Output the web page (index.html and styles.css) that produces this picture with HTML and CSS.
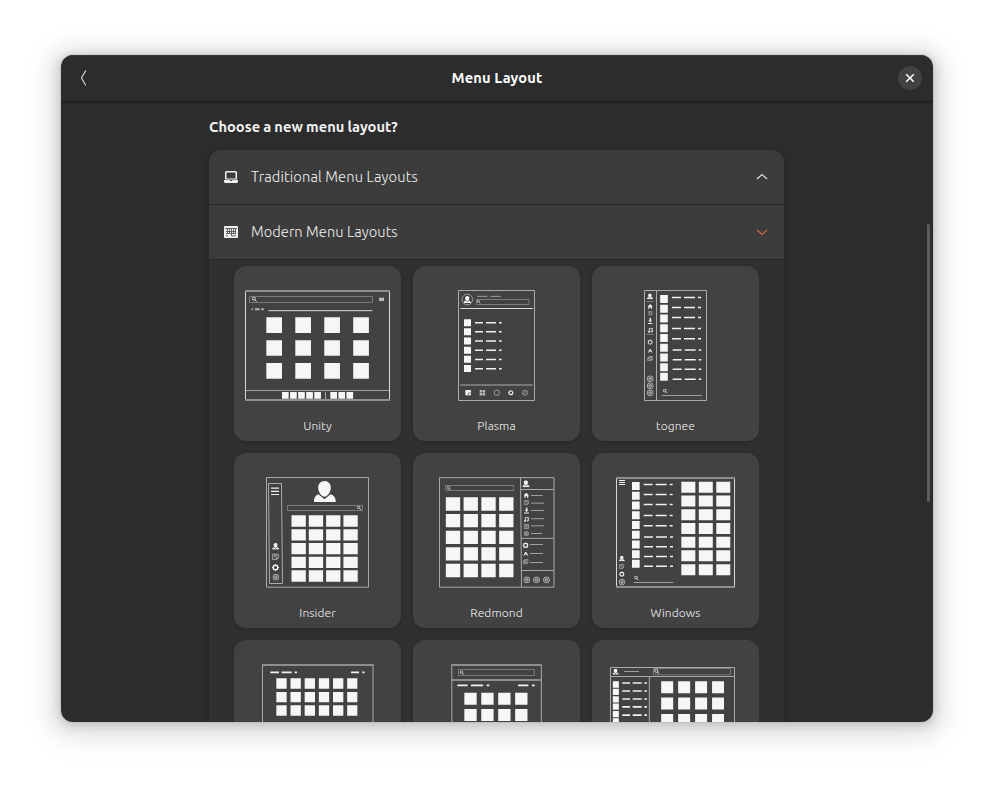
FILE: index.html
```html
<!DOCTYPE html>
<html lang="en">
<head>
<meta charset="utf-8">
<title>Menu Layout</title>
<link rel="stylesheet" href="styles.css">
</head>
<body>
<svg class="sprite" aria-hidden="true">
  <symbol id="user" viewBox="0 0 66 64"><path fill="#f6f6f6" d="M32 0C44 0 51 9 51 20C51 33 40 47 32 47C24 47 13 33 13 20C13 9 20 0 32 0ZM14 40L32 55L50 40Q66 45 66 63H0Q0 45 14 40Z"/></symbol>
  <symbol id="search" viewBox="0 0 16 16"><circle cx="6.5" cy="6" r="4.5"/><path d="M10 9.5L15 15"/></symbol>
  <symbol id="home" viewBox="0 0 16 16"><path fill="#eee" stroke="none" d="M8 0L16 8H14V15H10V10H6V15H2V8H0Z"/></symbol>
  <symbol id="note" viewBox="0 0 20 20"><path d="M2 2H18V13L13 18H2ZM13 18V13H18M6 6H14M6 10H12"/></symbol>
  <symbol id="download" viewBox="0 0 16 20"><path fill="#eee" stroke="none" d="M6 0H11V8H14L8 14L2 8H6ZM0 16H16V19H0Z"/></symbol>
  <symbol id="music" viewBox="0 0 16 16"><path d="M5 13V2H14V11"/><circle cx="3.5" cy="13" r="2"/><circle cx="12" cy="11.5" r="2"/></symbol>
  <symbol id="gear" viewBox="0 0 20 20"><circle cx="10" cy="10" r="6.5" stroke-width="4"/><path stroke-width="3" d="M10 0V3M10 17V20M0 10H3M17 10H20M3 3L5 5M15 15L17 17M3 17L5 15M15 5L17 3"/></symbol>
  <symbol id="tools" viewBox="0 0 16 16"><path stroke-width="3" d="M2 14L8 3L14 14M4 9H12"/></symbol>
  <symbol id="stack" viewBox="0 0 20 18"><path d="M6 2H18V11H6ZM6 6H2V16H14V11M9 5H15"/></symbol>
  <symbol id="round" viewBox="0 0 20 20"><circle cx="10" cy="10" r="8.5" stroke-width="2.4"/><circle cx="10" cy="10" r="4"/><path d="M7 10H13"/></symbol>
  <symbol id="box" viewBox="0 0 16 16"><path d="M1 2H15V14H1ZM4 5L12 11M12 5L4 11"/></symbol>
</svg>

<main class="window">
  <header class="titlebar">
    <svg class="back" viewBox="0 0 16 16"><path d="M9.800 .5L5.500 8L9.800 15.500"/></svg>
    <h1>Menu Layout</h1>
    <button class="close" aria-label="Close"><svg viewBox="0 0 24 24"><path d="M8.2 8.2L15.8 15.8M15.8 8.2L8.2 15.8"/></svg></button>
  </header>

  <div class="body">
    <section class="content">
      <h2>Choose a new menu layout?</h2>
      <div class="list">
        <div class="row">
          <svg class="row-icon" viewBox="0 0 16 16"><path fill="#f0f0f0" fill-rule="evenodd" d="M3.500 2H12.500Q14 2 14 3.500V10.500H2V3.500Q2 2 3.500 2ZM3.500 3.500V9.500H12.500V3.500ZM1 11H6.500L7.500 12H8.500L9.500 11H15V12.500Q15 14 13.500 14H2.500Q1 14 1 12.500Z"/></svg>
          <span class="row-title">Traditional Menu Layouts</span>
          <svg class="arrow" viewBox="0 0 16 16"><path d="M3 10L8 5.500L13 10"/></svg>
        </div>
        <div class="row">
          <svg class="row-icon" viewBox="0 0 16 16"><path fill="#f0f0f0" d="M2 2H14Q15 2 15 3V13Q15 14 14 14H2Q1 14 1 13V3Q1 2 2 2Z"/><path fill="none" stroke="#555" stroke-width=".9" d="M2 4.500H14M3 7.500H13M3 9.500H13M4.500 5V9.500M6.500 5V9.500M8.500 5V12M10.500 5V9.500M12.500 5V9.500M3 11.800H5M8 11.800H13"/></svg>
          <span class="row-title modern">Modern Menu Layouts</span>
          <svg class="arrow open" viewBox="0 0 16 16"><path d="M3 6L8 10.500L13 6"/></svg>
        </div>

        <div class="grid">
          <figure class="card">
            <svg class="thumb" viewBox="12 18 501 420">
              <path class="line bright" d="M46.500 90V423M478.500 90V423"/>
              <path class="line thick" d="M45 93H480M45 420H480"/>
              <path class="line" d="M48 391.500H477M286.500 396V417"/>
              <path class="line dim" d="M58.500 109.500H427.500V127.500H58.500Z"/>
              <use class="glyph strong" href="#search" x="65" y="110" width="16" height="16"/>
              <path class="dash dim" stroke-width="10" d="M447 118H462"/>
              <path class="dash dim" stroke-width="6" stroke-dasharray="4 6 14 5 7 99" d="M65 147.500H102"/>
              <path class="line bright" stroke-width="4" d="M115 152H427"/>
              <path class="tile" stroke-width="47" stroke-dasharray="47 39.900" d="M109 195.500H417M109 264H417M109 332.500H417"/>
              <path class="tile" stroke-width="20" stroke-dasharray="20 4.200" d="M156 406H273M301 406H370"/>
            </svg>
            <figcaption>Unity</figcaption>
          </figure>

          <figure class="card">
            <svg class="thumb" viewBox="9 18 501 420">
              <path class="line frame" d="M145.500 91.500H373.500V421.500H145.500Z"/>
              <circle class="line" cx="172" cy="118.500" r="16"/>
              <use href="#user" x="161" y="108" width="22" height="21"/>
              <path class="line" d="M201 109H232M241 109H272"/>
              <path class="line dim" d="M199.500 118.500H357V133.500H199.500Z"/>
              <use class="glyph strong" href="#search" x="200" y="119" width="12" height="13"/>
              <path class="line bright" d="M151 145.500H369"/>
              <path class="line thick dimmer" d="M151 375H368"/>
              <path class="tile" stroke-width="21" stroke-dasharray="21 6.500" d="M172.500 177.500V337"/>
              <path class="dash" stroke-width="4.500" stroke-dasharray="24 9 30 9 8 99" d="M195 188H276M195 215.500H276M195 243H276M195 270.500H276M195 298.500H276M195 326H276"/>
              <path class="dash" stroke-width="16" d="M166 398H183"/><path class="line dimmer" d="M175 407V399H183"/>
              <path class="dash dim" stroke-width="7.500" stroke-dasharray="7.500 1.500" d="M209 393.500H226M209 402.500H226"/>
              <rect class="line" x="253" y="391" width="15" height="14" rx="4"/>
              <use class="glyph strong" href="#gear" x="294" y="390" width="17" height="17"/>
              <circle class="line" cx="345" cy="398" r="7.500"/><path class="line" d="M341 400L349 394"/>
            </svg>
            <figcaption>Plasma</figcaption>
          </figure>

          <figure class="card">
            <svg class="thumb" viewBox="12 18 501 420">
              <path class="line frame" d="M169.500 91.500H355.500V421.500H169.500Z"/>
              <path class="line frame" d="M205.500 91V421"/>
              <use href="#user" x="177" y="100" width="18" height="18"/>
              <path class="line dim" d="M175 124.500H197M175 223.500H197"/>
              <use class="glyph" href="#home" x="179" y="132" width="15" height="15"/>
              <use class="glyph" href="#note" x="179" y="152" width="15" height="15"/>
              <use class="glyph" href="#download" x="179" y="174" width="15" height="19"/>
              <use class="glyph strong" href="#music" x="179" y="203" width="16" height="16"/>
              <use class="glyph" href="#gear" x="178" y="238" width="17" height="17"/>
              <use class="glyph strong" href="#tools" x="179" y="264" width="15" height="16"/>
              <use class="glyph" href="#stack" x="177" y="288" width="19" height="16"/>
              <use class="glyph" href="#round" x="176" y="346" width="21" height="21"/>
              <use class="glyph" href="#round" x="176" y="367" width="21" height="21"/>
              <use class="glyph" href="#round" x="176" y="388" width="21" height="21"/>
              <path class="tile" stroke-width="23" stroke-dasharray="24 5.200" d="M228 105V363"/>
              <path class="dash" stroke-width="4.500" stroke-dasharray="27 9 33 9 9 99" d="M252 112.500H339M252 142.500H339M252 172.500H339M252 205.500H339M252 236H339M254 270H340M254 299.500H340M254 328H340M254 357.500H340"/>
              <use class="glyph strong" href="#search" x="224" y="386" width="15" height="15"/>
              <path class="line" d="M222 406.500H342"/>
            </svg>
            <figcaption>tognee</figcaption>
          </figure>

          <figure class="card">
            <svg class="thumb" viewBox="12 9 501 420">
              <path class="line frame" d="M109.500 82.500H415.500V411.500H109.500Z"/>
              <path class="line frame" d="M115.500 100.500H154.500L157.500 400.500H118.500Z"/>
              <path class="dash" stroke-width="3.500" d="M123 114.500H147M123 124H147M123 133.500H147"/>
              <use href="#user" x="251" y="93" width="67" height="64"/>
              <path class="line dim" d="M172.500 166.500H397.500V181.500H172.500Z"/>
              <use class="glyph strong" href="#search" x="380" y="167" width="14" height="14"/>
              <path class="tile" stroke-width="34" stroke-dasharray="43 8.900" d="M184.500 213H384M184.500 254.500H384M184.500 296H384M184.500 337H384M184.500 378H384"/>
              <use href="#user" x="126" y="279" width="22" height="20"/>
              <use class="glyph" href="#note" x="126" y="310" width="21" height="21"/>
              <use class="glyph strong" href="#gear" x="126" y="342" width="21" height="21"/>
              <use class="glyph" href="#round" x="127" y="371" width="21" height="21"/>
            </svg>
            <figcaption>Insider</figcaption>
          </figure>

          <figure class="card">
            <svg class="thumb" viewBox="9 9 501 420">
              <path class="line frame" d="M88.500 83H432V411.500H88.500Z"/>
              <path class="line frame" d="M331.500 83L334.500 411M333 118.500H431M333 265H431M333 361.500H431"/>
              <path class="line dim" d="M106.500 106.500H310.500V121.500H106.500Z"/>
              <use class="glyph strong" href="#search" x="110" y="108" width="13" height="13"/>
              <path class="tile" stroke-width="40" stroke-dasharray="43 10.300" d="M107.500 162H311M107.500 212H311M107.500 262H311M107.500 311.500H311M107.500 361.500H311"/>
              <use href="#user" x="337" y="91" width="22" height="21"/>
              <use class="glyph" href="#home" x="341" y="128" width="16" height="16"/>
              <use class="glyph" href="#note" x="341" y="150" width="16" height="16"/>
              <use class="glyph" href="#download" x="342" y="172" width="15" height="20"/>
              <use class="glyph strong" href="#music" x="341" y="200" width="16" height="16"/>
              <use class="glyph" href="#box" x="341" y="221" width="16" height="16"/>
              <use class="glyph" href="#round" x="341" y="243" width="16" height="16"/>
              <use class="glyph strong" href="#gear" x="338" y="277" width="18" height="18"/>
              <use class="glyph strong" href="#tools" x="339" y="303" width="17" height="16"/>
              <use class="glyph" href="#stack" x="338" y="327" width="18" height="17"/>
              <path class="line" d="M363 136.500H398M363 159.500H403M363 181.500H403M363 206H402M363 227.500H403M363 250.500H396M360 283.500H399M360 310.500H399M360 337.500H399"/>
              <use class="glyph" href="#round" x="340" y="379" width="21" height="21"/>
              <use class="glyph" href="#round" x="369" y="379" width="21" height="21"/>
              <use class="glyph" href="#round" x="399" y="379" width="21" height="21"/>
            </svg>
            <figcaption>Redmond</figcaption>
          </figure>

          <figure class="card">
            <svg class="thumb" viewBox="12 9 501 420">
              <path class="line bright" d="M85.500 81V414M439.500 81V414"/>
              <path class="line thick" d="M84 84H441M84 411H441"/>
              <path class="dash" stroke-width="3" d="M93 91.500H111M93 97.500H111M93 103.500H111"/>
              <path class="tile" stroke-width="23" stroke-dasharray="24 5.200" d="M143.500 96V354"/>
              <path class="dash" stroke-width="4.500" stroke-dasharray="27 9 33 9 9 99" d="M167 103.500H255M167 133.500H255M167 163.500H255M167 196.500H255M167 227H255M168 261H256M168 290.500H256M168 319.500H256M168 349H256"/>
              <path class="tile" stroke-width="33" stroke-dasharray="42 10.400" d="M280 112H427M280 153H427M280 194.500H427M280 235.500H427M280 276.500H427M280 317.500H427M280 359H427"/>
              <use href="#user" x="92" y="317" width="19" height="17"/>
              <use class="glyph" href="#note" x="93" y="341" width="16" height="16"/>
              <use class="glyph strong" href="#gear" x="93" y="364" width="17" height="17"/>
              <use class="glyph" href="#round" x="92" y="386" width="20" height="21"/>
              <use class="glyph strong" href="#search" x="138" y="377" width="15" height="15"/>
              <path class="line" d="M137 397.500H256"/>
            </svg>
            <figcaption>Windows</figcaption>
          </figure>

          <figure class="card">
            <svg class="thumb" viewBox="102 12 501 420">
              <path class="line frame" d="M187.500 84V411H519V84"/>
              <path class="line thick" d="M186 87H520"/>
              <path class="dash" stroke-width="5" stroke-dasharray="26 8 30 9 7 99" d="M211 109H292"/>
              <path class="dash" stroke-width="5" stroke-dasharray="24 10 7 99" d="M453 109H494"/>
              <path class="tile" stroke-width="31" stroke-dasharray="31 11.500" d="M229 142.500H472M229 183.500H472M229 223.500H472"/>
            </svg>
          </figure>

          <figure class="card">
            <svg class="thumb" viewBox="639 12 501 420">
              <path class="line frame" d="M755.500 85V411H1024V85"/>
              <path class="line thick" d="M754 87H1025M754 132H1025"/>
              <path class="line dim" d="M775.500 100.500H1003V118.500H775.500Z"/>
              <use class="glyph strong" href="#search" x="778" y="103" width="15" height="14"/>
              <path class="dash" stroke-width="5" stroke-dasharray="31 10 36 11 8 99" d="M772 148H869"/>
              <path class="dash" stroke-width="5" stroke-dasharray="31 11 8 99" d="M954 148H1005"/>
              <path class="tile" stroke-width="36" stroke-dasharray="37 13.800" d="M793 188.500H983M793 237H983"/>
            </svg>
          </figure>

          <figure class="card">
            <svg class="thumb" viewBox="276 12 501 420">
              <path class="line frame" d="M331.500 94.500H703.500V411H331.500ZM331 121.500H703M448 121V411"/>
              <use href="#user" x="337" y="98" width="20" height="18"/>
              <path class="line" d="M372 106.500H417"/>
              <path class="line dim" d="M460.500 97.500H691.500V116.500H460.500Z"/>
              <use class="glyph strong" href="#search" x="462" y="98" width="17" height="17"/>
              <path class="tile" stroke-width="18" stroke-dasharray="19 3.200" d="M347.500 136V262"/>
              <path class="dash" stroke-width="5" stroke-dasharray="23 8 27 8 8 99" d="M367 141H441M367 165H441M367 189H441M367 212.500H441M367 237.500H441"/>
              <path class="tile" stroke-width="36" stroke-dasharray="36 14.900" d="M483.500 153.500H672M483.500 202.500H672M483.500 252H672"/>
            </svg>
          </figure>
        </div>
      </div>
    </section>
    <div class="scrollbar"></div>
  </div>
</main>
</body>
</html>
```
FILE: styles.css
```css
* { box-sizing: border-box; }

body {
  margin: 0;
  height: 789px;
  padding: 55px 61px;
  overflow: hidden;
  background: #fff;
  color: #f2f2f2;
  font-family: Ubuntu, "Noto Sans", sans-serif;
}

.sprite { display: none; }

.window {
  display: flex;
  flex-direction: column;
  width: 872px;
  height: 667px;
  overflow: hidden;
  border-radius: 12px;
  background: #2c2c2c;
  box-shadow: 0 0 0 1px rgba(0, 0, 0, .05), 0 2px 8px 2px rgba(0, 0, 0, .13), 0 3px 20px 10px rgba(0, 0, 0, .09), 0 6px 32px 16px rgba(0, 0, 0, .04);
}

.titlebar {
  display: grid;
  grid-template-columns: 24px 1fr 24px;
  align-items: center;
  flex: none;
  height: 47px;
  padding: 0 11px;
  border-bottom: 1px solid #1f1f1f;
  box-shadow: inset 0 1px #383838, 0 1px 2px rgba(0, 0, 0, .2);
}

h1 {
  margin: 0;
  font-size: 14.667px;
  line-height: 20px;
  font-weight: 600;
  letter-spacing: .13px;
  text-align: center;
  color: #fff;
}

.back {
  width: 16px;
  height: 16px;
  margin-left: 4px;
  fill: none;
  stroke: #ddd;
  stroke-width: 1.100;
}

.close {
  width: 24px;
  height: 24px;
  padding: 0;
  border: 0;
  border-radius: 50%;
  background: #424242;
}

.close svg {
  display: block;
  fill: none;
  stroke: #fff;
  stroke-width: 1.500;
}

.body {
  display: flex;
  flex: 1;
  min-height: 0;
  overflow: hidden;
}

.content {
  flex: none;
  width: 575px;
  margin-left: 148px;
  padding-top: 15px;
}

h2 {
  margin: 0 0 13px;
  font-size: 14.667px;
  line-height: 20px;
  font-weight: 600;
  letter-spacing: .03px;
  word-spacing: -.4px;
  white-space: nowrap;
}

.list {
  border-radius: 12px;
  background: #303030;
  box-shadow: 0 0 0 1px rgba(0, 0, 0, .04), 0 1px 4px 1px rgba(0, 0, 0, .12);
}

.row {
  display: flex;
  align-items: center;
  height: 55px;
  padding: 0 14px;
  border-bottom: 1px solid #262626;
  background: #3c3c3c;
}

.row:first-child { border-radius: 12px 12px 0 0; }

.row-icon {
  width: 16px;
  height: 16px;
}

.row-title {
  flex: 1;
  margin-left: 12px;
  font-size: 14.667px;
  line-height: 20px;
  font-weight: 350;
  letter-spacing: .13px;
}

.row-title.modern { letter-spacing: .05px; }

.arrow {
  width: 16px;
  height: 16px;
  fill: none;
  stroke: #e4e4e4;
  stroke-width: 1.100;
}

.arrow.open { stroke: #d4683f; }

.grid {
  display: grid;
  grid-template-columns: repeat(3, 167px);
  grid-auto-rows: 175px;
  gap: 12px;
  padding: 6px 25px;
}

.card {
  margin: 0;
  border-radius: 12px;
  background: #424242;
  box-shadow: 0 1px 3px 1px rgba(0, 0, 0, .12);
}

.thumb {
  display: block;
  width: 167px;
  height: 140px;
}

figcaption {
  margin-top: 10px;
  font-size: 12px;
  line-height: 20px;
  font-weight: 350;
  letter-spacing: .1px;
  text-align: center;
}

.line, .tile, .dash, .glyph { fill: none; }
.line { stroke: #b2b2b2; stroke-width: 2.500; }
.frame { stroke: #aaa; stroke-width: 3; }
.bright { stroke: #d8d8d8; stroke-width: 3; }
.thick { stroke: #8e8e8e; stroke-width: 6; }
.dim { stroke: #858585; }
.dimmer { stroke: #777; }
.tile { stroke: #f6f6f6; }
.dash { stroke: #f0f0f0; }
.dash.dim { stroke: #b8b8b8; }
.glyph { stroke: #c8c8c8; stroke-width: 2.200; }
.glyph.strong { stroke: #eee; stroke-width: 2.600; }

.scrollbar {
  width: 3px;
  height: 278px;
  margin: 122px 3px 0 auto;
  border-radius: 2px;
  background: #5c5c5c;
}
```
